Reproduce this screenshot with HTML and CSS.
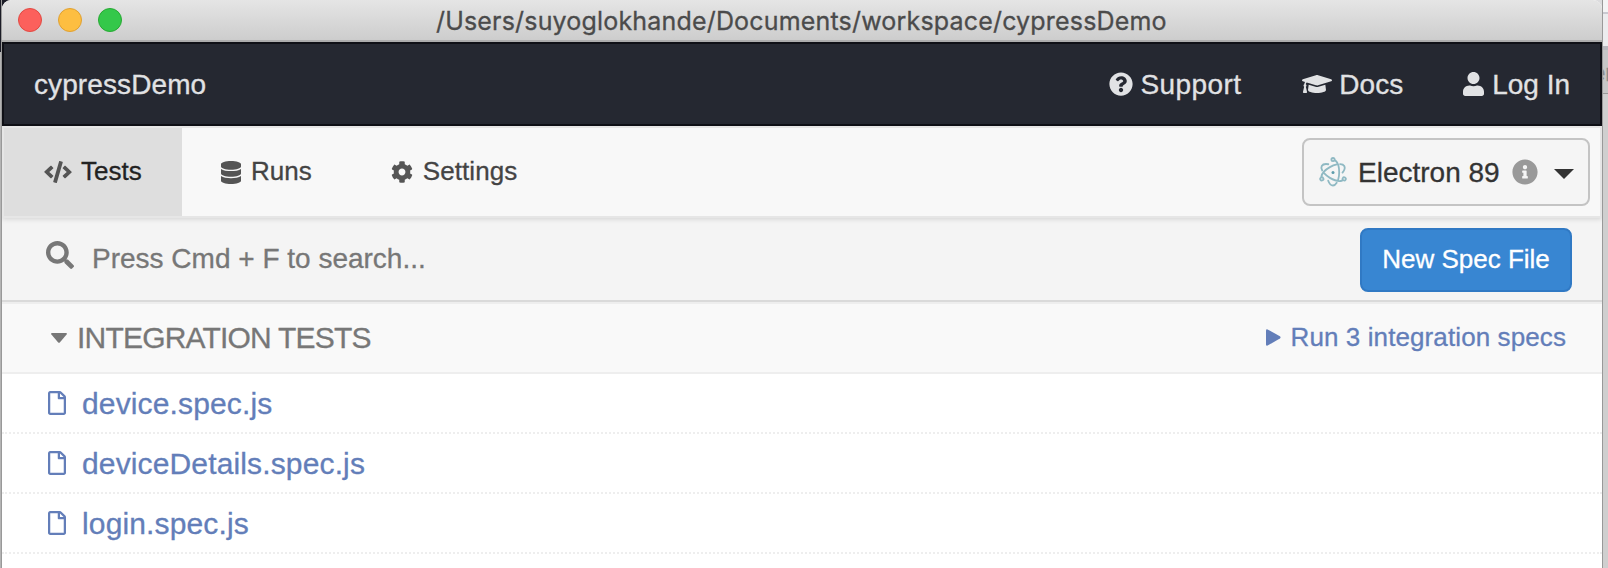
FILE: index.html
```html
<!DOCTYPE html>
<html lang="en">
<head>
<meta charset="utf-8">
<title>cypressDemo</title>
<link rel="stylesheet" href="styles.css">
</head>
<body>
<div class="desktop">
  <div class="edge-left"></div>
  <main class="window">
    <header class="titlebar">
      <div class="lights"><i class="light red"></i><i class="light yellow"></i><i class="light green"></i></div>
      <span class="path">/Users/suyoglokhande/Documents/workspace/cypressDemo</span>
    </header>
    <nav class="topnav">
      <span class="project">cypressDemo</span>
      <div class="links">
        <a class="link support"><svg width="24" height="24" viewBox="0 0 512 512"><path d="M504 256c0 136.997-111.043 248-248 248S8 392.997 8 256C8 119.083 119.043 8 256 8s248 111.083 248 248zM262.655 90c-54.497 0-89.255 22.957-116.549 63.758-3.536 5.286-2.353 12.415 2.715 16.258l34.699 26.31c5.205 3.947 12.621 3.008 16.665-2.122 17.864-22.658 30.113-35.797 57.303-35.797 20.429 0 45.698 13.148 45.698 32.958 0 14.976-12.363 22.667-32.534 33.976C247.128 238.528 216 254.941 216 296v4c0 6.627 5.373 12 12 12h56c6.627 0 12-5.373 12-12v-1.333c0-28.462 83.186-29.647 83.186-106.667 0-58.002-60.165-102-116.531-102zM256 338c-25.365 0-46 20.635-46 46 0 25.364 20.635 46 46 46s46-20.636 46-46c0-25.365-20.635-46-46-46z"/></svg><span>Support</span></a>
        <a class="link docs"><svg width="30" height="24" viewBox="0 0 640 512"><path d="M622.34 153.2L343.4 67.5c-15.2-4.67-31.6-4.67-46.79 0L17.66 153.2c-23.54 7.23-23.54 38.36 0 45.59l48.63 14.94c-10.67 13.19-17.23 29.28-17.88 46.9C38.78 266.15 32 276.11 32 288c0 10.78 5.68 19.85 13.86 25.65L20.33 428.53C18.11 438.52 25.71 448 35.94 448h56.11c10.24 0 17.84-9.48 15.62-19.47L82.14 313.65C90.32 307.85 96 298.78 96 288c0-11.57-6.47-21.25-15.66-26.87.76-15.02 8.44-28.3 20.69-36.72L296.6 284.5c9.06 2.78 26.44 6.25 46.79 0l278.95-85.7c23.55-7.24 23.55-38.36 0-45.6zM352.79 315.09c-28.53 8.76-52.84 3.92-65.59 0l-145.02-44.55L128 384c0 35.35 85.96 64 192 64s192-28.65 192-64l-14.18-113.47-145.03 44.56z"/></svg><span>Docs</span></a>
        <a class="link login"><svg width="21" height="24" viewBox="0 0 448 512"><path d="M224 256c70.700 0 128-57.300 128-128S294.700 0 224 0 96 57.300 96 128s57.300 128 128 128zm89.600 32h-16.700c-22.200 10.200-46.900 16-72.900 16s-50.600-5.800-72.900-16h-16.700C60.200 288 0 348.200 0 422.400V464c0 26.500 21.500 48 48 48h352c26.500 0 48-21.500 48-48v-41.600c0-74.200-60.200-134.400-134.400-134.400z"/></svg><span>Log In</span></a>
      </div>
    </nav>
    <div class="tabs">
      <a class="tab active"><svg width="28" height="22" viewBox="0 0 640 512"><path d="M278.900 511.500l-61-17.700c-6.400-1.800-10-8.500-8.200-14.900L346.200 8.700c1.800-6.400 8.500-10 14.900-8.200l61 17.700c6.400 1.800 10 8.500 8.200 14.900L293.800 503.300c-1.900 6.400-8.500 10.100-14.900 8.200zm-114-112.200l43.500-46.400c4.600-4.900 4.300-12.700-.8-17.200L117 256l90.600-79.700c5.100-4.500 5.500-12.300.8-17.200l-43.500-46.400c-4.500-4.800-12.100-5.100-17-.5L3.800 247.200c-5.100 4.700-5.100 12.800 0 17.500l144.100 135.100c4.900 4.600 12.500 4.400 17-.5zm327.200.6l144.100-135.100c5.100-4.700 5.100-12.800 0-17.500L492.100 112.100c-4.800-4.500-12.400-4.300-17 .5L431.600 159c-4.600 4.900-4.300 12.700.8 17.200L523 256l-90.600 79.700c-5.100 4.500-5.500 12.300-.8 17.200l43.500 46.400c4.500 4.900 12.100 5.100 17 .6z"/></svg><span>Tests</span></a>
      <a class="tab runs"><svg width="20" height="23" viewBox="0 0 448 512"><path d="M448 73.143v45.714C448 159.143 347.667 192 224 192S0 159.143 0 118.857V73.143C0 32.857 100.333 0 224 0s224 32.857 224 73.143zM448 176v102.857C448 319.143 347.667 352 224 352S0 319.143 0 278.857V176c48.125 33.143 136.208 48.572 224 48.572S399.874 209.143 448 176zm0 160v102.857C448 479.143 347.667 512 224 512S0 479.143 0 438.857V336c48.125 33.143 136.208 48.572 224 48.572S399.874 369.143 448 336z"/></svg><span>Runs</span></a>
      <a class="tab settings"><svg width="22" height="22" viewBox="0 0 512 512"><path d="M487.400 315.700l-42.600-24.600c4.300-23.200 4.300-47 0-70.200l42.600-24.600c4.900-2.800 7.100-8.600 5.500-14-11.100-35.600-30-67.800-54.700-94.600-3.800-4.100-10-5.100-14.800-2.300L380.800 110c-17.900-15.400-38.500-27.300-60.800-35.100V25.800c0-5.600-3.900-10.500-9.400-11.700-36.700-8.200-74.300-7.800-109.200 0-5.500 1.200-9.400 6.100-9.400 11.700V75c-22.200 7.900-42.800 19.800-60.800 35.100L88.700 85.500c-4.900-2.800-11-1.900-14.800 2.300-24.700 26.700-43.600 58.900-54.700 94.600-1.700 5.400.6 11.200 5.500 14L67.300 221c-4.300 23.200-4.300 47 0 70.200l-42.600 24.600c-4.900 2.800-7.100 8.600-5.500 14 11.100 35.600 30 67.800 54.700 94.600 3.800 4.100 10 5.100 14.800 2.300l42.600-24.600c17.900 15.400 38.500 27.300 60.800 35.100v49.200c0 5.600 3.900 10.500 9.400 11.700 36.700 8.200 74.300 7.800 109.200 0 5.500-1.200 9.400-6.100 9.400-11.700v-49.200c22.200-7.900 42.800-19.800 60.800-35.100l42.600 24.600c4.900 2.800 11 1.900 14.800-2.300 24.700-26.700 43.600-58.900 54.700-94.600 1.500-5.500-.7-11.300-5.600-14.100zM256 336c-44.100 0-80-35.900-80-80s35.900-80 80-80 80 35.900 80 80-35.900 80-80 80z"/></svg><span>Settings</span></a>
      <button class="browser">
        <svg class="electron" width="28" height="30" viewBox="-14 -15.500 28 30"><defs><g id="orbit" fill="none" stroke="#8fb9c3" stroke-width="1.800" stroke-linecap="round"><path d="M2.400-12C4.800-10 6.200-5.500 6.200 0c0 2.800-.4 5.200-1.100 7.400M3.700 10.300C2.600 12.100 1.400 13 0 13c-1.900 0-3.700-1.800-4.800-4.800"/><circle cx="0" cy="-12.900" r="1.600"/></g></defs><use href="#orbit"/><use href="#orbit" transform="rotate(120)"/><use href="#orbit" transform="rotate(240)"/><circle r="1.500" fill="#5e9dac"/></svg>
        <span class="browser-name">Electron 89</span>
        <svg class="info" width="26" height="26" viewBox="0 0 512 512"><path d="M256 8C119.043 8 8 119.083 8 256c0 136.997 111.043 248 248 248s248-111.003 248-248C504 119.083 392.957 8 256 8zm0 110c23.196 0 42 18.804 42 42s-18.804 42-42 42-42-18.804-42-42 18.804-42 42-42zm56 254c0 6.627-5.373 12-12 12h-88c-6.627 0-12-5.373-12-12v-24c0-6.627 5.373-12 12-12h12v-64h-12c-6.627 0-12-5.373-12-12v-24c0-6.627 5.373-12 12-12h64c6.627 0 12 5.373 12 12v100h12c6.627 0 12 5.373 12 12v24z"/></svg>
        <svg class="caret" width="20" height="10" viewBox="0 0 20 10"><path d="M0 0h20L10 10z"/></svg>
      </button>
    </div>
    <div class="search">
      <svg width="28" height="28" viewBox="0 0 512 512"><path d="M505 442.700L405.300 343c-4.500-4.500-10.600-7-17-7H372c27.600-35.300 44-79.700 44-128C416 93.100 322.900 0 208 0S0 93.100 0 208s93.100 208 208 208c48.300 0 92.700-16.400 128-44v16.300c0 6.400 2.500 12.500 7 17l99.700 99.700c9.400 9.400 24.600 9.400 33.900 0l28.300-28.300c9.400-9.400 9.400-24.600.1-34zM208 336c-70.700 0-128-57.200-128-128 0-70.700 57.200-128 128-128 70.700 0 128 57.200 128 128 0 70.700-57.200 128-128 128z"/></svg>
      <span class="placeholder">Press Cmd + F to search...</span>
      <button class="new-spec">New Spec File</button>
    </div>
    <div class="group">
      <svg class="fold" width="16" height="10" viewBox="0 0 16 10"><path d="M1 0h14q1.500.3.600 1.500L9 9.200q-1 1-2 0L.4 1.500Q-.5.300 1 0z"/></svg>
      <span class="group-name">INTEGRATION TESTS</span>
      <a class="run"><svg width="15" height="17" viewBox="0 0 15 17"><path d="M0 1.300Q.2-.2 1.600.4l12.300 6.900q1.300 1.200 0 2.300L1.600 16.500Q.2 17 0 15.700z"/></svg><span>Run 3 integration specs</span></a>
    </div>
    <ul class="specs">
      <li class="spec"><svg width="18" height="24" viewBox="0 0 384 512"><path d="M369.900 97.900L286 14C277 5 264.800-.1 252.100-.1H48C21.500 0 0 21.500 0 48v416c0 26.500 21.500 48 48 48h288c26.500 0 48-21.500 48-48V131.900c0-12.700-5.100-25-14.100-34zM332.100 128H256V51.900l76.100 76.100zM48 464V48h160v104c0 13.300 10.700 24 24 24h104v288H48z"/></svg><span>device.spec.js</span></li>
      <li class="spec"><svg width="18" height="24" viewBox="0 0 384 512"><path d="M369.900 97.900L286 14C277 5 264.800-.1 252.100-.1H48C21.500 0 0 21.500 0 48v416c0 26.500 21.500 48 48 48h288c26.500 0 48-21.500 48-48V131.900c0-12.700-5.100-25-14.100-34zM332.100 128H256V51.900l76.100 76.100zM48 464V48h160v104c0 13.300 10.700 24 24 24h104v288H48z"/></svg><span>deviceDetails.spec.js</span></li>
      <li class="spec"><svg width="18" height="24" viewBox="0 0 384 512"><path d="M369.900 97.900L286 14C277 5 264.800-.1 252.100-.1H48C21.500 0 0 21.500 0 48v416c0 26.500 21.500 48 48 48h288c26.500 0 48-21.500 48-48V131.900c0-12.700-5.100-25-14.100-34zM332.100 128H256V51.900l76.100 76.100zM48 464V48h160v104c0 13.300 10.700 24 24 24h104v288H48z"/></svg><span>login.spec.js</span></li>
    </ul>
  </main>
  <div class="edge-right"><div class="behind-top"></div><div class="behind-tab">er</div><div class="behind-rest"></div></div>
</div>
</body>
</html>
```
FILE: styles.css
```css
* { box-sizing: border-box; }
body { margin: 0; font-family: "Liberation Sans", Arial, sans-serif; background: #cfcfcf; overflow: hidden; -webkit-text-stroke: .3px currentColor; }
svg { display: block; flex: none; fill: currentColor; }
button { font: inherit; margin: 0; }
span { white-space: nowrap; }
.desktop { display: flex; width: 1608px; height: 568px; background: linear-gradient(#1b1c26 0 52px, #b4b4b4 52px) 0 0 / 10px 100% no-repeat #dcdcde; }
.edge-left { width: 2px; border-right: 1px solid #999; }
.window { width: 1600px; height: 568px; background: #fff; border-radius: 9px 9px 0 0; overflow: hidden; }
.titlebar { display: flex; align-items: center; height: 42px; padding-left: 16px; background: linear-gradient(#e5e5e5, #cdcdcd 40px, #adadad 40px); }
.lights { display: flex; gap: 16px; padding-bottom: 2px; }
.light { width: 24px; height: 24px; border: 1px solid; border-radius: 50%; }
.red { background: #fc605c; border-color: #e14942; }
.yellow { background: #fdbe41; border-color: #dfa032; }
.green { background: #34c84a; border-color: #27a933; }
.path { margin-left: 314px; font-family: Inter, sans-serif; font-size: 25px; letter-spacing: .18px; color: #4b4b4b; }
.topnav { display: flex; justify-content: space-between; align-items: center; height: 84px; padding: 2px 30px 0; background: #252831; border: 2px solid #0f1016; color: #e1e2e4; font-size: 28px; }
.topnav svg { margin-bottom: 2px; }
.project { letter-spacing: .1px; }
.links { display: flex; gap: 60px; }
.link { display: flex; align-items: center; gap: 8px; }
.support { letter-spacing: .4px; gap: 7px; margin-right: 1px; }
.docs { gap: 7px; }
.tabs { display: flex; height: 92px; border: 2px solid #e6e6e6; background: #f8f8f8; box-shadow: 0 1px 5px rgba(0,0,0,.14); position: relative; font-size: 26px; color: #444; }
.tab { display: flex; align-items: center; gap: 9px; padding: 0 40px; }
.tab span { margin-bottom: 2px; }
.tab svg { color: #555; }
.active { background: #dedede; color: #222; width: 178px; }
.runs { gap: 10px; padding: 0 39px; }
.settings { gap: 10px; }
.settings span { letter-spacing: .1px; }
.browser { display: flex; align-items: center; margin: 10px 10px 0 auto; width: 288px; height: 68px; padding: 0 15px; border: 2px solid #c4c4c4; border-radius: 8px; background: #f5f5f5; color: #333; font-size: 28px; }
.browser-name { margin: 2px 0 0 11px; }
.info { color: #999; margin-left: 12px; }
.caret { margin-left: 16px; margin-top: 4px; }
.search { display: flex; align-items: center; height: 84px; padding: 0 30px 0 44px; background: #f4f4f4; border-bottom: 2px solid #dadada; color: #777; font-size: 28px; }
.search svg { margin-bottom: 8px; }
.placeholder { margin-left: 18px; }
.new-spec { width: 212px; height: 64px; margin: 2px 0 0 auto; padding: 0 0 2px; border: 2px solid #3079c4; border-radius: 8px; background: #3886d2; color: #fff; font-size: 26px; }
.group { display: flex; align-items: center; height: 72px; padding: 0 36px 0 49px; background: #f9f9f9; border-top: 2px solid #eee; border-bottom: 2px solid #eee; color: #777; font-size: 30px; }
.group-name { margin-left: 10px; letter-spacing: -.8px; }
.run { display: flex; align-items: center; gap: 10px; margin-left: auto; color: #637eb9; font-size: 26px; letter-spacing: .1px; }
.run svg { margin-bottom: 2px; }
.group span { margin-bottom: 1px; }
.specs { list-style: none; margin: 0; padding: 0; }
.spec { display: flex; align-items: center; height: 60px; padding-left: 46px; gap: 16px; border-bottom: 2px dotted #eee; color: #637eb9; font-size: 30px; letter-spacing: .14px; }
.spec span { margin-top: 2px; }
.edge-right { width: 6px; height: 568px; border-left: 1px solid #999; overflow: hidden; }
.behind-top { height: 50px; background: linear-gradient(#f4f4f5 0 12px, #c9c9d0 12px 14px, #ececee 14px 46px, #b8b8be 46px); }
.behind-tab { height: 44px; background: #c6c6c6; border-bottom: 1px solid #999; color: #8a8a8a; font-size: 24px; line-height: 46px; text-indent: -11px; }
.behind-rest { height: 474px; background: #cfcfcf; }
```
